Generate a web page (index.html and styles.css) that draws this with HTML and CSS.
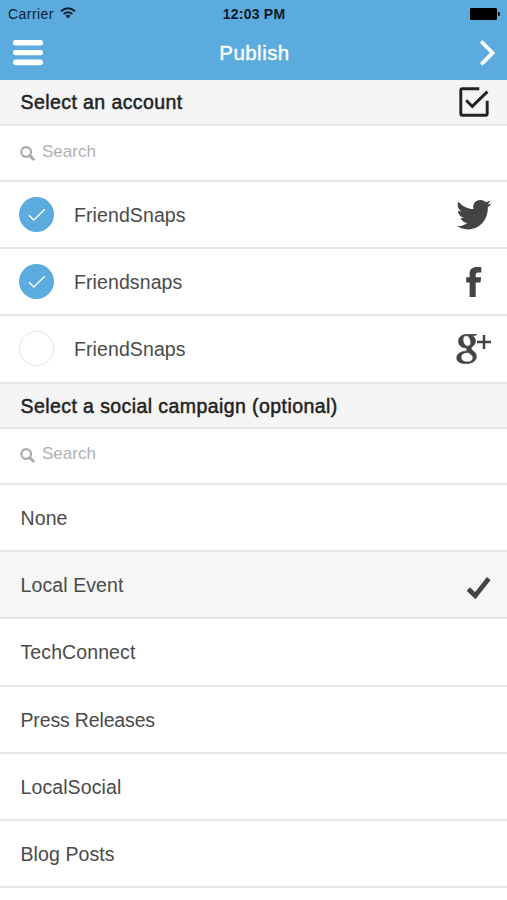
FILE: index.html
```html
<!DOCTYPE html>
<html lang="en">
<head>
<meta charset="utf-8">
<title>Publish</title>
<link rel="stylesheet" href="styles.css">
</head>
<body>
<header class="top">
  <div class="status">
    <span class="carrier">Carrier
      <svg class="wifi" width="16" height="12" viewBox="0 0 16 12"><path d="M1 4.2Q8-1.8 15 4.2M3.6 7Q8 3.3 12.4 7" fill="none" stroke="#0b2231" stroke-width="1.9"/><path d="M5.5 8.7Q8 6.9 10.5 8.7L8 11.4Z" fill="#0b2231"/></svg>
    </span>
    <span class="time">12:03 PM</span>
    <svg class="battery" width="30" height="12" viewBox="0 0 30 12"><rect width="27" height="12" rx="1.2"/><path d="M28 4h.5q1.5 0 1.5 2t-1.5 2H28z"/></svg>
  </div>
  <div class="nav">
    <svg width="30" height="26" viewBox="0 0 30 26" fill="#fff"><rect width="30" height="5.6" rx="2.4"/><rect y="9.9" width="30" height="5.4" rx="2.4"/><rect y="19.6" width="30" height="5.6" rx="2.4"/></svg>
    <h1>Publish</h1>
    <svg width="16" height="26" viewBox="0 0 16 26"><path d="M2.4 2.6L12.6 12.9 2.4 23.2" fill="none" stroke="#fff" stroke-width="3.8" stroke-linecap="round"/></svg>
  </div>
</header>
<main>
  <h2 class="section first"><span>Select an account</span>
    <svg width="30" height="30" viewBox="0 0 30 30" fill="none" stroke="#222" stroke-width="2.9"><path d="M20.3 1.8H3.3Q1.8 1.8 1.8 3.3V26.7Q1.8 28.2 3.3 28.2H26.7Q28.2 28.2 28.2 26.7V13.8M7.2 13.2L13.3 19.4 28.4 4.6"/></svg>
  </h2>
  <div class="search"><svg width="15" height="15" viewBox="0 0 15 15" fill="none" stroke="#aaa"><circle cx="6.2" cy="6" r="4.9" stroke-width="2.1"/><path d="M9.6 9.5L13.4 13.3" stroke-width="2.8" stroke-linecap="round"/></svg><span>Search</span></div>
  <ul>
    <li><i class="radio on"><svg width="18" height="14" viewBox="0 0 18 14"><path d="M1 7.2L5.8 12 16.8 1.2" fill="none" stroke="#fff" stroke-width="1.4"/></svg></i><span>FriendSnaps</span>
      <svg class="social" width="36" height="30" viewBox="0 0 36 30" fill="#444"><path d="M2.5 1.7C6.3 6.1 11.3 8.8 17.5 9.1C16.1 3.9 19.8.2 24.3.1C26.8 0 28.4 1 29.7 2.3C31.4 2 32.9 1.3 34.3.5C33.7 2.2 32.8 3.4 31.4 4.4C33 4.2 34.2 3.8 35.3 3.4C34.3 5 33.2 6.2 31.8 7.3C32.2 18.7 24.7 29.3 12.2 29.4C7.8 29.5 3.9 28.2.7 26.1C4.8 26.5 8.5 25.3 11.3 23C7.8 22.7 5.4 20.5 4.6 17.8C5.8 18.1 6.8 18 7.8 17.7C4.2 16.8 2 13.8 1.9 10.4C3 11 4.1 11.3 5.2 11.3C1.7 8.7.9 4.8 2.5 1.7Z"/></svg></li>
    <li><i class="radio on"><svg width="18" height="14" viewBox="0 0 18 14"><path d="M1 7.2L5.8 12 16.8 1.2" fill="none" stroke="#fff" stroke-width="1.4"/></svg></i><span>Friendsnaps</span>
      <svg class="social" width="36" height="30" viewBox="0 0 36 30" fill="#444"><path d="M13.6 30V15.5H10.2V10.2H13.6V7C13.6 2 16.4 0 20.8 0H25.3V5.5H22Q19.7 5.5 19.7 7.6V10.2H25.2L24.5 15.5H19.7V30Z"/></svg></li>
    <li><i class="radio"></i><span>FriendSnaps</span>
      <svg class="social" width="36" height="30" viewBox="0 0 36 30"><path fill="#444" stroke="#444" stroke-width=".7" fill-rule="evenodd" d="M11.5.3H21L18.7 1.7H16.2C18.5 3 19.4 4.9 19.4 7C19.4 10 17.7 11.5 16.2 12.8C14.2 14.5 15.3 15.5 17 16.8C19.2 18.5 20.3 20.1 20.3 22.6C20.3 27 16.3 29.6 9.7 29.6C4.5 29.6.8 27.6.8 23.9C.8 19.2 5.6 17.2 11.5 17C10.5 15.9 10.3 14.9 10.8 13.8C5.4 14.1 2.5 11.1 2.5 7.3C2.5 3 6.3.3 11.5.3ZM10 1.6C7.6 1.8 6.7 3.6 7 6.1C7.3 9.5 9.2 12.2 11.6 12.2C14.1 12.1 15.1 10.2 14.7 7.4C14.2 3.9 12.4 1.5 10 1.6ZM12.3 18.4C8 18.4 5 20 5 23C5 26 7.6 28 11.4 28C15.1 28 17 26.3 17 23.8C17 21.8 15.7 20.7 12.3 18.4Z"/><path d="M28 1V15M21 8H35" stroke="#444" stroke-width="2.5"/></svg></li>
  </ul>
  <h2 class="section"><span>Select a social campaign (optional)</span></h2>
  <div class="search"><svg width="15" height="15" viewBox="0 0 15 15" fill="none" stroke="#aaa"><circle cx="6.2" cy="6" r="4.9" stroke-width="2.1"/><path d="M9.6 9.5L13.4 13.3" stroke-width="2.8" stroke-linecap="round"/></svg><span>Search</span></div>
  <ul>
    <li><span>None</span></li>
    <li class="selected"><span>Local Event</span><svg class="tick" width="26" height="24" viewBox="0 0 26 24"><path d="M2.3 13L9.2 19.7 22.8 2.6" fill="none" stroke="#444" stroke-width="4.8"/></svg></li>
    <li><span>TechConnect</span></li>
    <li><span class="snug">Press Releases</span></li>
    <li><span>LocalSocial</span></li>
    <li><span>Blog Posts</span></li>
  </ul>
</main>
</body>
</html>
```

FILE: styles.css
```css
* { box-sizing: border-box; }
body {
  margin: 0;
  height: 900px;
  overflow: hidden;
  background: #fff;
  color: #4a4a4a;
  font-family: "Liberation Sans", Arial, sans-serif;
}
svg { display: block; flex: none; }
h1, h2, ul { margin: 0; padding: 0; }
.top { height: 79.5px; background: #5cabde; }
.status {
  display: grid;
  grid-template-columns: 1fr auto 1fr;
  align-items: center;
  height: 27px;
  padding: 0 7px 0 8px;
  font-size: 14px;
  color: #0b2231;
}
.carrier { display: flex; gap: 6px; letter-spacing: .45px; }
.wifi { margin-top: 1px; }
.time { font-weight: bold; color: #0a1a26; letter-spacing: .25px; }
.battery { justify-self: end; fill: #000; }
.nav {
  display: grid;
  grid-template-columns: 1fr auto 1fr;
  align-items: center;
  height: 51px;
  padding: 0 11px 0 13px;
}
.nav h1 {
  color: #fff;
  font-size: 20.5px;
  font-weight: normal;
  letter-spacing: .45px;
  -webkit-text-stroke: .4px #fff;
}
.nav svg:last-child { justify-self: end; }
.section {
  display: flex;
  align-items: center;
  justify-content: space-between;
  height: 45.4px;
  padding: 0 18px 0 20.5px;
  background: #f5f5f5;
  border-bottom: 2px solid #e6e6e6;
  color: #222;
  font-size: 19.5px;
  font-weight: normal;
  letter-spacing: .42px;
  -webkit-text-stroke: .5px #222;
}
.section span { padding-top: 2px; }
.first { height: 46.5px; }
.first span { padding-top: 1px; }
.search {
  display: flex;
  align-items: center;
  gap: 7px;
  height: 56px;
  padding: 0 20px 3px;
  border-bottom: 2px solid #e6e6e6;
  color: #b0b0b0;
  font-size: 17px;
}
.search svg { margin-top: 3px; }
ul { list-style: none; }
li {
  display: flex;
  align-items: center;
  height: 67.2px;
  padding: 0 15px 0 20.5px;
  border-bottom: 2px solid #e6e6e6;
  font-size: 19.5px;
  letter-spacing: .1px;
}
li span { padding-top: 2px; }
.snug { letter-spacing: -.15px; }
.radio {
  display: flex;
  align-items: center;
  justify-content: center;
  width: 35px;
  height: 35px;
  margin: 0 20px 0 -1.5px;
  border: 1.5px solid #e2e2e2;
  border-radius: 50%;
}
.on { background: #5cabde; border: 0; }
.social, .tick { margin-left: auto; }
.tick { margin-top: 6px; }
.selected { background: #f6f6f6; }
```
